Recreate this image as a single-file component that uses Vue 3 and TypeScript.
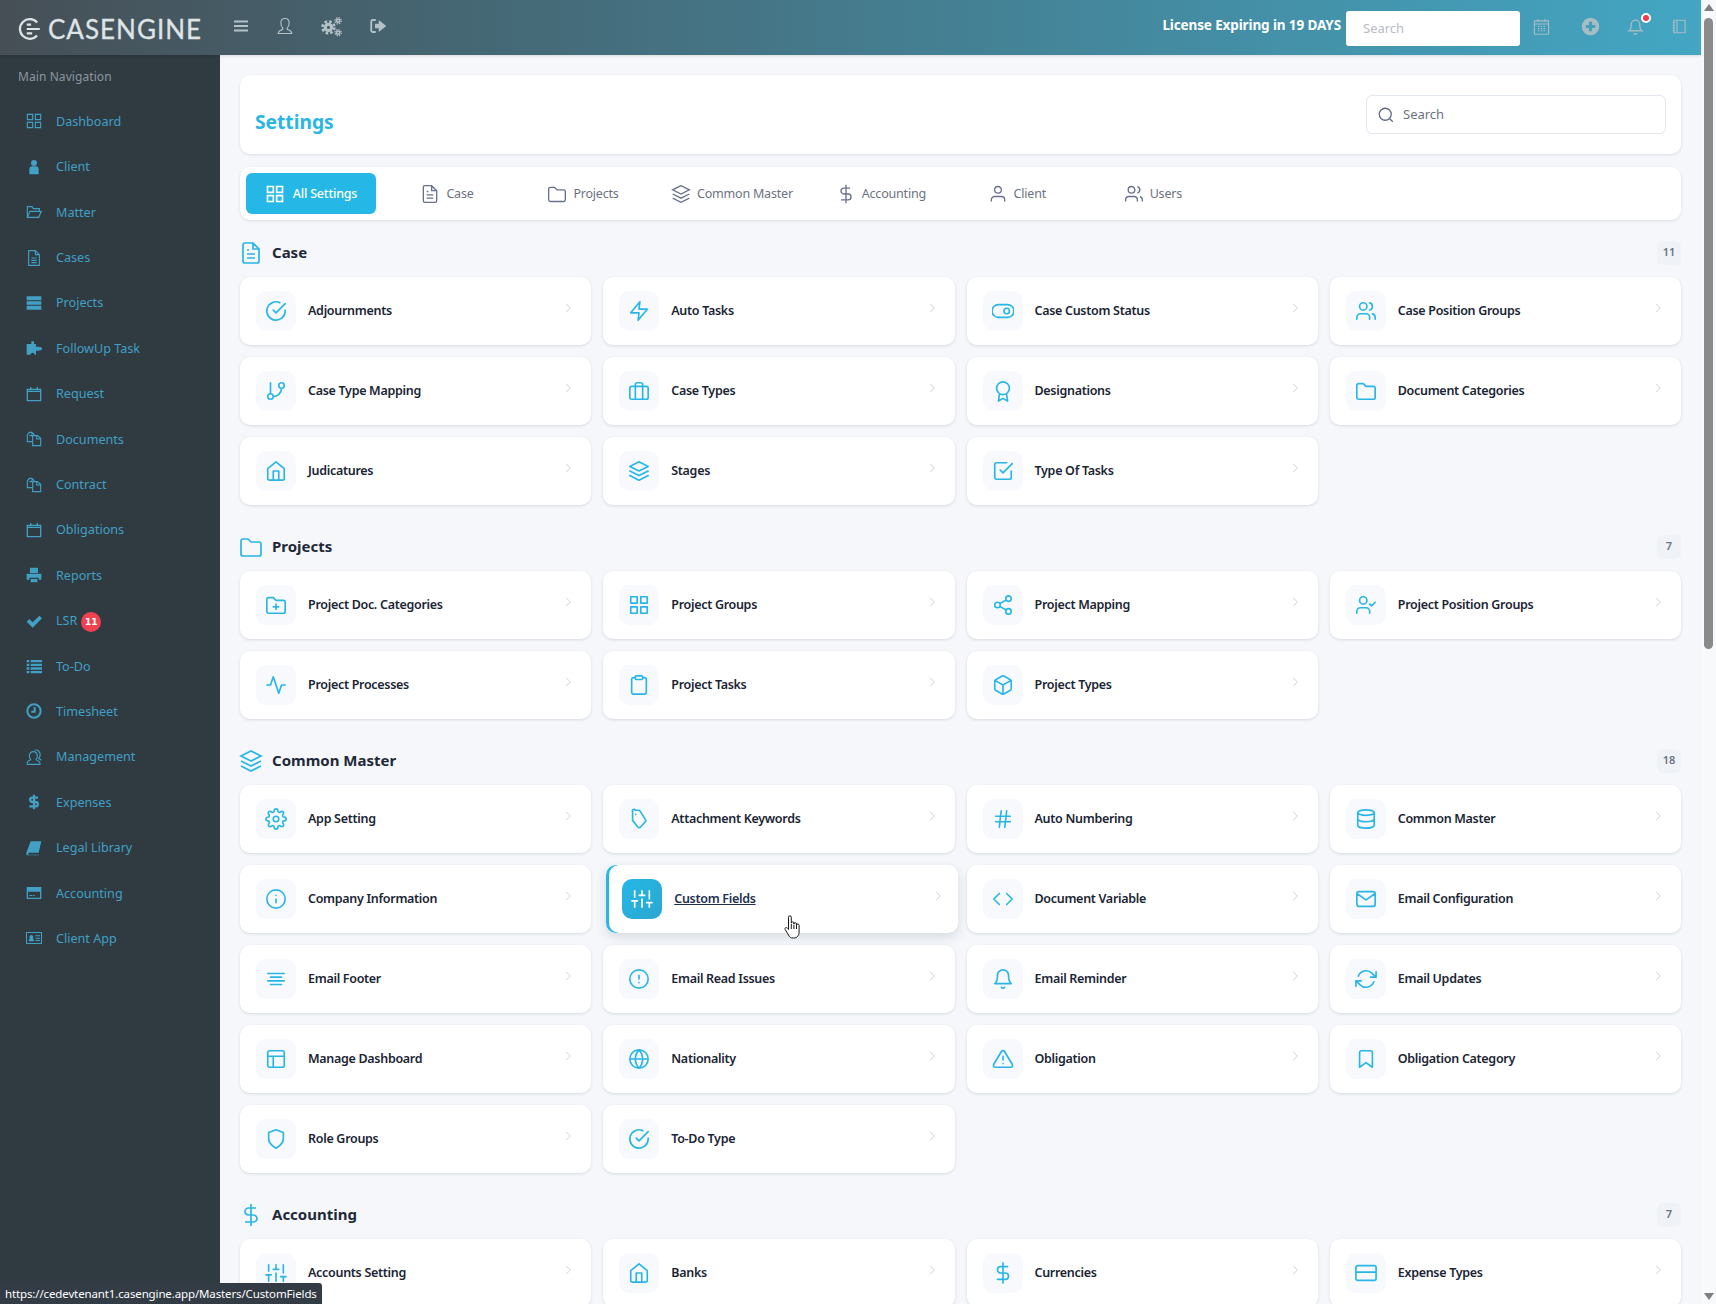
<script setup lang="ts">
interface CardItem {
  label: string;
  icon: string;
  hover?: boolean;
}
interface Section {
  title: string;
  icon: string;
  count: number;
  items: CardItem[];
}
interface NavItem {
  label: string;
  d: string;
  filled?: boolean;
  weight?: number;
  badge?: number;
}

const circle = (cx: number, cy: number, r: number): string =>
  `M${cx - r} ${cy}a${r} ${r} 0 1 0 ${r * 2} 0a${r} ${r} 0 1 0 ${-r * 2} 0z`;

const folder = "M4 4h5l3 3h8a2 2 0 0 1 2 2v10a2 2 0 0 1-2 2H4a2 2 0 0 1-2-2V6a2 2 0 0 1 2-2z";

const icons: Record<string, string> = {
  grid: "M3 3h7v7H3zM14 3h7v7h-7zM3 14h7v7H3zM14 14h7v7h-7z",
  file: "M14 2H6a2 2 0 0 0-2 2v16a2 2 0 0 0 2 2h12a2 2 0 0 0 2-2V8zM14 2v6h6M16 13H8M16 17H8M10 9H8",
  folder,
  layers: "M12 2 2 7l10 5 10-5zM2 12l10 5 10-5M2 17l10 5 10-5",
  dollar: "M12 1v22M17 5H9.5a3.5 3.5 0 0 0 0 7h5a3.5 3.5 0 0 1 0 7H6",
  user: "M20 21v-2a4 4 0 0 0-4-4H8a4 4 0 0 0-4 4v2" + circle(12, 7, 4),
  users: "M16 21v-2a4 4 0 0 0-4-4H6a4 4 0 0 0-4 4v2" + circle(9, 7, 4) + "M22 21v-2a4 4 0 0 0-3-3.87M16 3.13a4 4 0 0 1 0 7.75",
  checkCircle: "M22 11.08V12a10 10 0 1 1-5.93-9.14M22 4 12 14.01l-3-3",
  zap: "M13 2 3 14h9l-1 8 10-12h-9z",
  toggle: "M7 5h10a7 7 0 0 1 0 14H7A7 7 0 0 1 7 5z" + circle(16, 12, 3),
  branch: "M6 3v12" + circle(18, 6, 3) + circle(6, 18, 3) + "M18 9a9 9 0 0 1-9 9",
  briefcase: "M4 7h16a2 2 0 0 1 2 2v10a2 2 0 0 1-2 2H4a2 2 0 0 1-2-2V9a2 2 0 0 1 2-2zM16 21V5a2 2 0 0 0-2-2h-4a2 2 0 0 0-2 2v16",
  award: circle(12, 9, 7) + "M8.2 14.9 7 23l5-3 5 3-1.2-8.1",
  home: "M3 9.5 12 2l9 7.5V20a2 2 0 0 1-2 2H5a2 2 0 0 1-2-2zM9 22V12h6v10",
  checkSquare: "M9 11l3 3L22 4M21 12v7a2 2 0 0 1-2 2H5a2 2 0 0 1-2-2V5a2 2 0 0 1 2-2h11",
  folderPlus: folder + "M12 11v6M9 14h6",
  share: circle(18, 5, 3) + circle(6, 12, 3) + circle(18, 19, 3) + "M8.6 13.5l6.8 4M15.4 6.5l-6.8 4",
  userCheck: "M16 21v-2a4 4 0 0 0-4-4H6a4 4 0 0 0-4 4v2" + circle(9, 7, 4) + "M16 11l2 2 4-4",
  activity: "M22 12h-4l-3 9L9 3l-3 9H2",
  clipboard: "M16 4h2a2 2 0 0 1 2 2v14a2 2 0 0 1-2 2H6a2 2 0 0 1-2-2V6a2 2 0 0 1 2-2h2M9 2h6a1 1 0 0 1 1 1v2a1 1 0 0 1-1 1H9a1 1 0 0 1-1-1V3a1 1 0 0 1 1-1z",
  box: "M21 16V8a2 2 0 0 0-1-1.73l-7-4a2 2 0 0 0-2 0l-7 4A2 2 0 0 0 3 8v8a2 2 0 0 0 1 1.73l7 4a2 2 0 0 0 2 0l7-4A2 2 0 0 0 21 16zM3.27 6.96 12 12.01l8.73-5.05M12 22.08V12",
  settings: circle(12, 12, 3) + "M19.4 15a1.65 1.65 0 0 0 .33 1.82l.06.06a2 2 0 0 1 0 2.83 2 2 0 0 1-2.83 0l-.06-.06a1.65 1.65 0 0 0-1.82-.33 1.65 1.65 0 0 0-1 1.51V21a2 2 0 0 1-2 2 2 2 0 0 1-2-2v-.09A1.65 1.65 0 0 0 9 19.4a1.65 1.65 0 0 0-1.82.33l-.06.06a2 2 0 0 1-2.83 0 2 2 0 0 1 0-2.83l.06-.06a1.65 1.65 0 0 0 .33-1.82 1.65 1.65 0 0 0-1.51-1H3a2 2 0 0 1-2-2 2 2 0 0 1 2-2h.09A1.65 1.65 0 0 0 4.6 9a1.65 1.65 0 0 0-.33-1.82l-.06-.06a2 2 0 0 1 0-2.83 2 2 0 0 1 2.83 0l.06.06a1.65 1.65 0 0 0 1.82.33H9a1.65 1.65 0 0 0 1-1.51V3a2 2 0 0 1 2-2 2 2 0 0 1 2 2v.09a1.65 1.65 0 0 0 1 1.51 1.65 1.65 0 0 0 1.82-.33l.06-.06a2 2 0 0 1 2.83 0 2 2 0 0 1 0 2.83l-.06.06a1.65 1.65 0 0 0-.33 1.82V9a1.65 1.65 0 0 0 1.51 1H21a2 2 0 0 1 2 2 2 2 0 0 1-2 2h-.09a1.65 1.65 0 0 0-1.51 1z",
  tag: "M8 2.500h3.500a2 2 0 0 1 1.700.9l5.800 9.300a2 2 0 0 1-.3 2.500l-5 5.500a2 2 0 0 1-3 0L5 13.500V4a1.500 1.500 0 0 1 3-1.500zM8.500 7h.01",
  hash: "M4 9h16M4 15h16M10 3 8 21M16 3l-2 18",
  database: "M12 2c4.97 0 9 1.34 9 3s-4.03 3-9 3-9-1.34-9-3 4.03-3 9-3zM21 12c0 1.66-4 3-9 3s-9-1.34-9-3M3 5v14c0 1.66 4 3 9 3s9-1.34 9-3V5",
  info: circle(12, 12, 10) + "M12 16v-4M12 8h.01",
  sliders: "M4 21v-7M4 10V3M12 21v-9M12 8V3M20 21v-5M20 12V3M1 14h6M9 8h6M17 16h6",
  code: "M16 18l6-6-6-6M8 6l-6 6 6 6",
  mail: "M4 4h16a2 2 0 0 1 2 2v12a2 2 0 0 1-2 2H4a2 2 0 0 1-2-2V6a2 2 0 0 1 2-2zM22 6l-10 7L2 6",
  align: "M18 10H6M21 6H3M21 14H3M18 18H6",
  alert: circle(12, 12, 10) + "M12 8v4M12 16h.01",
  bell: "M18 8A6 6 0 0 0 6 8c0 7-3 9-3 9h18s-3-2-3-9M13.73 21a2 2 0 0 1-3.46 0",
  refresh: "M23 4v6h-6M1 20v-6h6M3.51 9a9 9 0 0 1 14.85-3.36L23 10M1 14l4.64 4.36A9 9 0 0 0 20.49 15",
  layout: "M5 3h14a2 2 0 0 1 2 2v14a2 2 0 0 1-2 2H5a2 2 0 0 1-2-2V5a2 2 0 0 1 2-2zM3 9h18M9 21V9",
  globe: circle(12, 12, 10) + "M2 12h20M12 2a15.3 15.3 0 0 1 4 10 15.3 15.3 0 0 1-4 10 15.3 15.3 0 0 1-4-10 15.3 15.3 0 0 1 4-10z",
  triangle: "M10.29 3.86 1.82 18a2 2 0 0 0 1.71 3h16.94a2 2 0 0 0 1.71-3L13.71 3.86a2 2 0 0 0-3.42 0zM12 9v4M12 17h.01",
  bookmark: "M19 21l-7-5-7 5V5a2 2 0 0 1 2-2h10a2 2 0 0 1 2 2z",
  shield: "M12 22s8-4 8-10V5l-8-3-8 3v7c0 6 8 10 8 10z",
  card: "M3 4h18a2 2 0 0 1 2 2v12a2 2 0 0 1-2 2H3a2 2 0 0 1-2-2V6a2 2 0 0 1 2-2zM1 11h22",
};

const calendar = "M2 5h20v17H2zM2 8h20M7 1.500v5M17 1.500v5";
const copies = "M9 2H5L2 6v10h7M9 2v5H5M9 2l3 3v2M12 7h5l5 4v11H10V7zM16 7v5h6";

const navItems: NavItem[] = [
  { label: "Dashboard", d: "M2 2h8v8H2zM14 2h8v8h-8zM2 14h8v8H2zM14 14h8v8h-8z" },
  { label: "Client", filled: true, d: circle(12, 6, 4.5) + "M5 15c0-3 2-4 4-4h6c2 0 4 1 4 4v8H5z" },
  { label: "Matter", d: "M2 20V4h7l2 3h9v4M2 20l4-9h17l-4 9z" },
  { label: "Cases", d: "M14 1H4v22h16V7zM14 1v6h6M8 12h8M8 15.5h8M8 19h8" },
  { label: "Projects", filled: true, d: "M1 2h22v6H1zM1 9.500h22v5H1zM1 16h22v6H1z" },
  { label: "FollowUp Task", filled: true, d: "M8 2h4v4h3v4h5v1a2.5 2.5 0 0 1 4 2 2.5 2.5 0 0 1-4 2v1h-5v6h-2a3 3 0 0 0-6 0H1v-8h0V6h7z" },
  { label: "Request", d: calendar, weight: 2 },
  { label: "Documents", d: copies },
  { label: "Contract", d: copies },
  { label: "Obligations", d: calendar, weight: 2 },
  { label: "Reports", filled: true, d: "M6 1h12v8H6zM1 10h22v9h-4v-3H5v3H1zM7 18h10v5H7z" },
  { label: "LSR", badge: 11, filled: true, d: "M1 13l4-4 5 5L20 4l4 4-14 14z" },
  { label: "To-Do", filled: true, d: "M1 3h4v3.5H1zM7 3h17v3.5H7zM1 8.5h4V12H1zM7 8.5h17V12H7zM1 14h4v3.5H1zM7 14h17v3.5H7zM1 19.5h4V23H1zM7 19.5h17V23H7z" },
  { label: "Timesheet", d: circle(12, 12, 10) + "M13 6v7H8", weight: 3 },
  { label: "Management", d: "M2 23v-3c0-2 3-2 5-4-3-3-3-12 4-12s7 9 4 12c2 2 6 2 6 5v2zM13 2c5-2 9 3 8 8 0 2-1 3-2 4 1 1 3 2 4 3" },
  { label: "Expenses", d: "M12 1v22M18 5.5H9.5a3.2 3.2 0 0 0 0 6.5h5a3.2 3.2 0 0 1 0 6.5H5", weight: 3.4 },
  { label: "Legal Library", filled: true, d: "M7 2h16l-4 17H4a2 2 0 0 0 0 3h16l-1 1H3c-2 0-3-2-2.500-4z" },
  { label: "Accounting", filled: true, d: "M1 3h22v18H1zM3 10v9h18v-9zM5 15h4v1.500H5zM10 15h3v1.500h-3z" },
  { label: "Client App", filled: true, d: "M0 3h24v18H0zM1.500 4.500v15h21v-15zM4 17c0-3 1-4 2-4a3 3 0 1 1 4 0c1 0 2 1 2 4zM14 8h7v1.500h-7zM14 11.500h7V13h-7zM14 15h7v1.500h-7z" },
];

const tabs = [
  { label: "All Settings", icon: "grid", active: true },
  { label: "Case", icon: "file" },
  { label: "Projects", icon: "folder" },
  { label: "Common Master", icon: "layers" },
  { label: "Accounting", icon: "dollar" },
  { label: "Client", icon: "user" },
  { label: "Users", icon: "users" },
];

const sections: Section[] = [
  {
    title: "Case",
    icon: "file",
    count: 11,
    items: [
      { label: "Adjournments", icon: "checkCircle" },
      { label: "Auto Tasks", icon: "zap" },
      { label: "Case Custom Status", icon: "toggle" },
      { label: "Case Position Groups", icon: "users" },
      { label: "Case Type Mapping", icon: "branch" },
      { label: "Case Types", icon: "briefcase" },
      { label: "Designations", icon: "award" },
      { label: "Document Categories", icon: "folder" },
      { label: "Judicatures", icon: "home" },
      { label: "Stages", icon: "layers" },
      { label: "Type Of Tasks", icon: "checkSquare" },
    ],
  },
  {
    title: "Projects",
    icon: "folder",
    count: 7,
    items: [
      { label: "Project Doc. Categories", icon: "folderPlus" },
      { label: "Project Groups", icon: "grid" },
      { label: "Project Mapping", icon: "share" },
      { label: "Project Position Groups", icon: "userCheck" },
      { label: "Project Processes", icon: "activity" },
      { label: "Project Tasks", icon: "clipboard" },
      { label: "Project Types", icon: "box" },
    ],
  },
  {
    title: "Common Master",
    icon: "layers",
    count: 18,
    items: [
      { label: "App Setting", icon: "settings" },
      { label: "Attachment Keywords", icon: "tag" },
      { label: "Auto Numbering", icon: "hash" },
      { label: "Common Master", icon: "database" },
      { label: "Company Information", icon: "info" },
      { label: "Custom Fields", icon: "sliders", hover: true },
      { label: "Document Variable", icon: "code" },
      { label: "Email Configuration", icon: "mail" },
      { label: "Email Footer", icon: "align" },
      { label: "Email Read Issues", icon: "alert" },
      { label: "Email Reminder", icon: "bell" },
      { label: "Email Updates", icon: "refresh" },
      { label: "Manage Dashboard", icon: "layout" },
      { label: "Nationality", icon: "globe" },
      { label: "Obligation", icon: "triangle" },
      { label: "Obligation Category", icon: "bookmark" },
      { label: "Role Groups", icon: "shield" },
      { label: "To-Do Type", icon: "checkCircle" },
    ],
  },
  {
    title: "Accounting",
    icon: "dollar",
    count: 7,
    items: [
      { label: "Accounts Setting", icon: "sliders" },
      { label: "Banks", icon: "home" },
      { label: "Currencies", icon: "dollar" },
      { label: "Expense Types", icon: "card" },
    ],
  },
];
</script>

<template>
  <div class="page">
    <div class="app">
      <header class="topbar">
        <div class="logo">
          <svg class="logo-mark" viewBox="0 0 22 22" width="24" height="24">
            <path d="M17.500 5a9 9 0 1 0 0 12M8 7h4M8 11h12M8 15h5" />
          </svg>
          <span class="logo-text">CASENGINE</span>
        </div>
        <div class="top-tools">
          <svg viewBox="0 0 16 16" width="16" height="16"><path d="M1 3.500h14M1 8h14M1 12.500h14" stroke-width="2" /></svg>
          <svg viewBox="0 0 24 24" width="18" height="18"><path d="M3 22c0-4 3-4 6-5.500v-2C7 13 6.500 10 6.500 7.500 6.500 4 9 2 12 2s5.500 2 5.500 5.500c0 2.500-.5 5.500-2.500 7v2c3 1.500 6 1.500 6 5.500z" stroke-width="1.500" /></svg>
          <svg viewBox="0 0 24 24" width="21" height="21">
            <circle cx="8.500" cy="13" r="3.600" stroke-width="3.600" />
            <circle cx="8.500" cy="13" r="6.800" stroke-width="3" stroke-dasharray="3 2.340" />
            <circle cx="19.500" cy="5.500" r="1.800" stroke-width="1.800" />
            <circle cx="19.500" cy="5.500" r="3.500" stroke-width="1.600" stroke-dasharray="1.500 1.250" />
            <circle cx="19.500" cy="19" r="1.800" stroke-width="1.800" />
            <circle cx="19.500" cy="19" r="3.500" stroke-width="1.600" stroke-dasharray="1.500 1.250" />
          </svg>
          <svg viewBox="0 0 24 24" width="18" height="18">
            <path d="M9 4H5a2 2 0 0 0-2 2v12a2 2 0 0 0 2 2h4" stroke-width="2.500" />
            <path class="solid" d="M13 4l10 8-10 8v-5H8V9h5z" />
          </svg>
        </div>
        <div class="top-right">
          <span class="license">License Expiring in 19 DAYS</span>
          <div class="top-search">Search</div>
          <div class="top-icons">
            <svg class="ic-cal" viewBox="0 0 24 24" width="17" height="17">
              <path d="M2 4h20v19H2zM2 8.500h20M7 1.500v4M17 1.500v4M7 12h2M11 12h2M15 12h2M7 15h2M11 15h2M15 15h2M7 18h2M11 18h2M15 18h2" stroke-width="1.600" />
            </svg>
            <svg class="ic-plus" viewBox="0 0 24 24" width="19" height="19">
              <path class="solid" d="M12 1a11 11 0 1 0 0 22 11 11 0 0 0 0-22zM10 6h4v4h4v4h-4v4h-4v-4H6v-4h4z" fill-rule="evenodd" />
            </svg>
            <span class="bell">
              <svg viewBox="0 0 24 24" width="17" height="19">
                <path d="M18 9A6 6 0 0 0 6 9c0 7-3 9-3 9h18s-3-2-3-9M14 21a2 2 0 0 1-4 0" stroke-width="1.800" />
              </svg>
              <i class="bell-dot"></i>
            </span>
            <svg viewBox="0 0 24 24" width="15" height="19">
              <path d="M3 2h18v20H3zM8 2v20M1 6h4M1 10h4M1 14h4M1 18h4" stroke-width="1.800" />
            </svg>
          </div>
        </div>
      </header>

      <div class="body">
        <aside class="sidebar">
          <div class="nav-title">Main Navigation</div>
          <div v-for="item in navItems" :key="item.label" class="nav-item">
            <svg class="nav-icon" :class="{ filled: item.filled }" viewBox="0 0 24 24">
              <path :d="item.d" :stroke-width="item.weight ?? 1.7" />
            </svg>
            <span>{{ item.label }}</span>
            <span v-if="item.badge" class="nav-badge">{{ item.badge }}</span>
          </div>
        </aside>

        <main class="main">
          <div class="page-head">
            <h1 class="page-title">Settings</h1>
            <div class="page-search">
              <svg viewBox="0 0 24 24" width="18" height="18"><path d="M11 3a8 8 0 1 0 0 16 8 8 0 0 0 0-16zM21 21l-4.300-4.300" /></svg>
              <span>Search</span>
            </div>
          </div>

          <div class="tabs">
            <div v-for="tab in tabs" :key="tab.label" class="tab" :class="{ active: tab.active }">
              <svg viewBox="0 0 24 24" width="20" height="20"><path :d="icons[tab.icon]" /></svg>
              <span>{{ tab.label }}</span>
            </div>
          </div>

          <section v-for="sec in sections" :key="sec.title" class="section">
            <div class="sec-head">
              <svg viewBox="0 0 24 24" width="24" height="24"><path :d="icons[sec.icon]" /></svg>
              <h2>{{ sec.title }}</h2>
              <span class="count">{{ sec.count }}</span>
            </div>
            <div class="grid">
              <div v-for="item in sec.items" :key="item.label" class="card" :class="{ hover: item.hover }">
                <span class="card-icon">
                  <svg viewBox="0 0 24 24" width="22" height="22"><path :d="icons[item.icon]" /></svg>
                </span>
                <span class="card-label">{{ item.label }}</span>
                <svg class="chevron" viewBox="0 0 24 24" width="14" height="14"><path d="M9 5l7 7-7 7" /></svg>
              </div>
            </div>
          </section>
        </main>
      </div>
    </div>

    <div class="scrollbar">
      <i class="arrow up"></i>
      <div class="thumb"></div>
      <i class="arrow down"></i>
    </div>

    <svg class="cursor" viewBox="0 0 18 24" width="18" height="24">
      <path d="M4.500 2.200a1.400 1.400 0 0 1 2.800 0V8.200a1.300 1.300 0 0 1 2.600 0V9a1.300 1.300 0 0 1 2.600 0v1.300a1.300 1.300 0 0 1 2.600 0V17c0 3.500-2 6-5.500 6H9c-2.500 0-3.500-1-4.500-3L1.200 14.500c-.6-1 .1-2 1-2 .8 0 1.400.5 2.300 2z" />
      <path d="M7.300 9v5M9.900 9.500V14M12.500 10v4" />
    </svg>

    <div class="status">https://cedevtenant1.casengine.app/Masters/CustomFields</div>
  </div>
</template>

<style>
html,
body {
  margin: 0;
  background: #f5f7fb;
}
</style>

<style scoped>
.page {
  position: relative;
  display: flex;
  width: 1716px;
  height: 1304px;
  overflow: hidden;
  font-family: "Noto Sans", sans-serif;
  background: #f5f7fb;
}

.app {
  flex: 1;
  min-width: 0;
  display: flex;
  flex-direction: column;
}

.topbar {
  flex: none;
  display: flex;
  align-items: center;
  height: 55px;
  padding: 0 14px 3px 0;
  box-sizing: border-box;
  background: linear-gradient(90deg, #464f56 0%, #43a6c3 100%);
  box-shadow: 0 1px 3px rgba(0, 0, 0, 0.12);
  position: relative;
  z-index: 1;
}

.logo {
  width: 233px;
  flex: none;
  display: flex;
  align-items: center;
  gap: 6px;
  padding-left: 18px;
  box-sizing: border-box;
  margin-top: 6px;
}

.logo-mark path {
  fill: none;
  stroke: #dfe4e6;
  stroke-width: 2;
}

.logo-text {
  font-family: Lato, sans-serif;
  font-size: 26px;
  line-height: 1;
  letter-spacing: 1px;
  color: #dfe4e6;
  -webkit-text-stroke: 0.3px #dfe4e6;
}

.top-tools {
  display: flex;
  align-items: center;
  gap: 27px;
}

.top-tools svg path,
.top-tools svg circle {
  fill: none;
  stroke: #b4c2c7;
}

.top-tools svg path.solid {
  fill: #b4c2c7;
  stroke: none;
}

.top-right {
  margin-left: auto;
  display: flex;
  align-items: center;
}

.license {
  margin-right: 5px;
  margin-bottom: 2px;
  font-size: 13.500px;
  font-weight: 700;
  color: #fff;
  letter-spacing: -0.12px;
}

.top-search {
  width: 174px;
  height: 35px;
  margin-top: 5px;
  margin-right: 13px;
  padding-left: 17px;
  box-sizing: border-box;
  background: #fff;
  border-radius: 3px;
  font-size: 13px;
  line-height: 35px;
  color: #b8bcc8;
}

.top-icons {
  display: flex;
  align-items: center;
  gap: 28px;
}

.ic-cal {
  margin-right: 3px;
}

.ic-plus {
  margin-right: -1px;
}

.top-icons svg path {
  fill: none;
  stroke: #a8bcc4;
}

.top-icons svg path.solid {
  fill: #a8bcc3;
  stroke: none;
}

.bell {
  position: relative;
  display: flex;
}

.bell-dot {
  position: absolute;
  top: -4px;
  right: -7px;
  width: 6px;
  height: 6px;
  border: 2px solid #fff;
  border-radius: 50%;
  background: #ef3e4a;
}

.body {
  flex: 1;
  min-height: 0;
  display: flex;
}

.sidebar {
  flex: none;
  width: 220px;
  padding-top: 13px;
  box-sizing: border-box;
  background: #303a41;
}

.nav-title {
  height: 30.700px;
  padding-left: 18px;
  font-size: 12px;
  line-height: 18px;
  letter-spacing: 0.08px;
  color: #8b979e;
}

.nav-item {
  display: flex;
  align-items: center;
  height: 45.400px;
  padding-left: 26px;
  font-size: 12.600px;
  color: #41a0c4;
}

.nav-icon {
  flex: none;
  width: 16px;
  height: 16px;
  margin-right: 14px;
}

.nav-icon path {
  fill: none;
  stroke: #41a0c4;
}

.nav-icon.filled path {
  fill: #41a0c4;
  stroke: none;
}

.nav-badge {
  display: flex;
  align-items: center;
  justify-content: center;
  width: 20px;
  height: 20px;
  margin-left: 4px;
  margin-top: 2px;
  border-radius: 50%;
  background: #ef4150;
  color: #fff;
  font-family: "DejaVu Sans", sans-serif;
  font-size: 9px;
  font-weight: 700;
}

.main {
  flex: 1;
  min-width: 0;
  padding: 20px 20px 0;
  box-sizing: border-box;
}

.page-head {
  display: flex;
  align-items: center;
  justify-content: space-between;
  height: 79px;
  margin-bottom: 13px;
  padding: 0 15px;
  box-sizing: border-box;
  background: #fff;
  border-radius: 10px;
  box-shadow: 0 1px 3px rgba(30, 40, 60, 0.12);
}

.page-title {
  margin: 13px 0 0;
  font-size: 19.200px;
  font-weight: 700;
  color: #29b6e6;
}

.page-search {
  display: flex;
  align-items: center;
  gap: 8px;
  width: 300px;
  height: 39px;
  padding-left: 10px;
  box-sizing: border-box;
  border: 1px solid #e2e6ef;
  border-radius: 6px;
  font-size: 13px;
  color: #6b7280;
}

.page-search span {
  padding-bottom: 2px;
}

.page-search svg path {
  fill: none;
  stroke: #5f6b82;
  stroke-width: 1.700;
}

.tabs {
  display: flex;
  gap: 6px;
  height: 53px;
  margin-bottom: 21px;
  padding: 6px;
  box-sizing: border-box;
  background: #fff;
  border-radius: 10px;
  box-shadow: 0 1px 3px rgba(30, 40, 60, 0.12);
}

.tab {
  display: flex;
  align-items: center;
  justify-content: center;
  gap: 6px;
  min-width: 130px;
  padding: 0 17px;
  box-sizing: border-box;
  border-radius: 6px;
  font-size: 12.500px;
  letter-spacing: -0.2px;
  color: #6b7280;
}

.tab span {
  padding-bottom: 1px;
}

.tab svg path {
  fill: none;
  stroke: #67718c;
  stroke-width: 1.600;
}

.tab.active {
  background: #25b8e6;
  color: #fff;
  font-weight: 500;
  gap: 8px;
}

.tab.active svg path {
  stroke: #fff;
  stroke-width: 2;
}

.section {
  margin-bottom: 30px;
}

.sec-head {
  display: flex;
  align-items: center;
  height: 24px;
  margin-bottom: 12px;
}

.sec-head svg {
  flex: none;
  margin-left: -1px;
  margin-right: 9px;
}

.sec-head svg path {
  fill: none;
  stroke: #29b6e6;
  stroke-width: 1.700;
}

.sec-head h2 {
  margin: 0 0 2px;
  font-size: 15px;
  font-weight: 700;
  color: #1f2937;
}

.count {
  margin-left: auto;
  width: 24px;
  height: 24px;
  border-radius: 6px;
  background: #eff2f6;
  text-align: center;
  font-size: 11px;
  font-weight: 600;
  line-height: 22px;
  color: #6b7280;
}

.grid {
  display: grid;
  grid-template-columns: repeat(4, 1fr);
  gap: 12px;
}

.card {
  display: flex;
  align-items: center;
  gap: 12px;
  height: 68px;
  padding: 0 16px;
  box-sizing: border-box;
  background: #fff;
  border-radius: 10px;
  box-shadow: 0 1px 3px rgba(30, 40, 60, 0.14);
}

.card-icon {
  flex: none;
  display: flex;
  align-items: center;
  justify-content: center;
  width: 40px;
  height: 40px;
  border-radius: 10px;
  background: #f7f9fc;
}

.card-icon svg path {
  fill: none;
  stroke: #29b6e6;
  stroke-width: 1.800;
  stroke-linecap: round;
  stroke-linejoin: round;
}

.card-label {
  padding-bottom: 2px;
  font-size: 12.500px;
  font-weight: 600;
  color: #1b2533;
  letter-spacing: -0.3px;
}

.chevron {
  margin-left: auto;
  transform: translateY(-3px);
}

.chevron path {
  fill: none;
  stroke: #c9d0dc;
  stroke-width: 1.700;
}

.card.hover {
  transform: translateX(3px);
  box-shadow: inset 3px 0 0 #25b7e8, 0 4px 12px rgba(30, 40, 60, 0.14);
}

.card.hover .card-icon {
  background: linear-gradient(135deg, #25b8e6, #2aa6d0);
}

.card.hover .card-icon svg path {
  stroke: #fff;
}

.card.hover .card-label {
  padding-bottom: 0;
  margin-bottom: 2px;
  text-decoration: underline;
  color: #1f3050;
}

.card.hover .chevron {
  transform: translate(3px, -3px);
}

.scrollbar {
  flex: none;
  position: relative;
  display: flex;
  flex-direction: column;
  align-items: center;
  justify-content: space-between;
  width: 15px;
  background: #f8f9fb;
  padding: 4px 0;
  box-sizing: border-box;
}

.thumb {
  position: absolute;
  top: 18px;
  left: 3px;
  width: 9px;
  height: 631px;
  border-radius: 5px;
  background: #8b8b8b;
}

.arrow {
  width: 0;
  height: 0;
  border-left: 5px solid transparent;
  border-right: 5px solid transparent;
}

.arrow.up {
  border-bottom: 7px solid #7f7f7f;
}

.arrow.down {
  border-top: 7px solid #7f7f7f;
}

.cursor {
  position: absolute;
  left: 784px;
  top: 915px;
}

.cursor path {
  fill: #fff;
  stroke: #1a1a1a;
  stroke-width: 1;
}

.cursor path + path {
  fill: none;
}

.status {
  position: absolute;
  left: 0;
  bottom: 0;
  height: 21px;
  padding: 0 5px;
  border-top-right-radius: 3px;
  background: #333b45;
  color: #fff;
  font-size: 11.500px;
  letter-spacing: -0.13px;
  line-height: 21px;
  white-space: nowrap;
}
</style>
